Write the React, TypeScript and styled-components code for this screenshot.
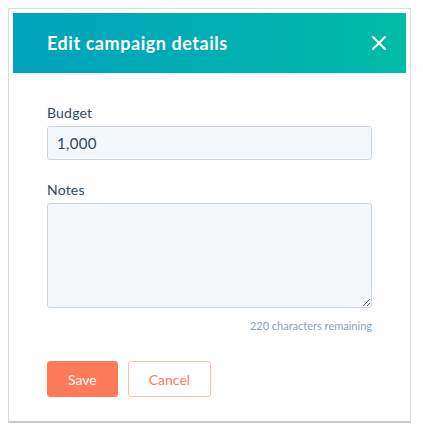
import React from "react";
import styled, { createGlobalStyle } from "styled-components";

const GlobalStyle = createGlobalStyle`
  body {
    margin: 8px;
    background: #ffffff;
    font-family: Lato, "Noto Sans", sans-serif;
    color: #33475b;
  }
`;

const Frame = styled.div`
  width: 393px;
  padding: 4px;
  border: 1px solid #dcdcdc;
  border-bottom-width: 2px;
  border-bottom-color: #c8c8c8;
  background: #fff;
`;

const Header = styled.div`
  height: 60px;
  display: flex;
  align-items: center;
  justify-content: space-between;
  padding: 0 20px 0 34px;
  background: linear-gradient(90deg, #00a2bd 0%, #00afb2 55%, #00bda5 100%);
`;

const Title = styled.h1`
  margin: 0;
  font-size: 18px;
  font-weight: 700;
  color: #fff;
  letter-spacing: 0.55px;
`;

const CloseButton = styled.button`
  border: 0;
  padding: 0;
  background: transparent;
  width: 14px;
  height: 14px;
  display: flex;
  cursor: pointer;
`;

const Body = styled.div`
  padding: 30px 34px 20px;
  display: flex;
  flex-direction: column;
`;

const Field = styled.div<{ gap?: number }>`
  display: flex;
  flex-direction: column;
  margin-bottom: ${(p) => p.gap ?? 0}px;
`;

const Label = styled.label`
  font-size: 14px;
  line-height: 20px;
  margin-bottom: 3px;
  color: #33475b;
  letter-spacing: 0.2px;
`;

const Input = styled.input`
  box-sizing: border-box;
  height: 34px;
  width: 100%;
  padding: 0 9px;
  border: 1px solid #cbd6e2;
  border-radius: 3px;
  background: #f5f8fa;
  font-family: inherit;
  font-size: 15px;
  color: #33475b;
  letter-spacing: 0.3px;
  outline: none;
`;

const TextArea = styled.textarea`
  box-sizing: border-box;
  height: 105px;
  width: 100%;
  padding: 8px 10px;
  border: 1px solid #cbd6e2;
  border-radius: 3px;
  background: #f5f8fa;
  font-family: inherit;
  font-size: 15px;
  color: #33475b;
  outline: none;
  resize: vertical;
  display: block;
`;

const Hint = styled.div`
  margin-top: 10px;
  text-align: right;
  font-size: 11px;
  line-height: 16px;
  color: #8aa1bb;
`;

const Actions = styled.div`
  display: flex;
  gap: 10px;
  margin-top: 27px;
`;

const Button = styled.button<{ primary?: boolean }>`
  box-sizing: border-box;
  height: 36px;
  padding: 0 ${(p) => (p.primary ? 20 : 20)}px;
  border-radius: 3px;
  border: 1px solid ${(p) => (p.primary ? "#ff7a59" : "#ffbcab")};
  background: ${(p) => (p.primary ? "#ff7a59" : "#fff")};
  color: ${(p) => (p.primary ? "#fff" : "#ff7a59")};
  font-family: inherit;
  font-size: 14px;
  cursor: pointer;
`;

export default function App() {
  return (
    <>
      <GlobalStyle />
      <Frame>
        <Header>
          <Title>Edit campaign details</Title>
          <CloseButton aria-label="Close">
            <svg width="14" height="14" viewBox="0 0 14 14">
              <path
                d="M1 1L13 13M13 1L1 13"
                stroke="#fff"
                strokeWidth="2"
                strokeLinecap="round"
              />
            </svg>
          </CloseButton>
        </Header>
        <Body>
          <Field gap={20}>
            <Label>Budget</Label>
            <Input defaultValue="1,000" />
          </Field>
          <Field>
            <Label>Notes</Label>
            <TextArea />
            <Hint>220 characters remaining</Hint>
          </Field>
          <Actions>
            <Button primary>Save</Button>
            <Button>Cancel</Button>
          </Actions>
        </Body>
      </Frame>
    </>
  );
}
